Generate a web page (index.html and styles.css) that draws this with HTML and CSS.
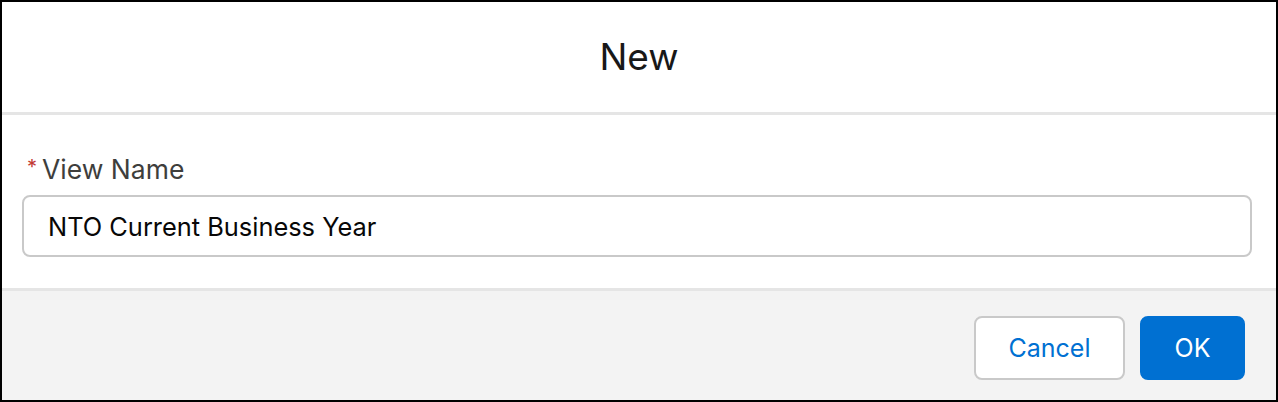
FILE: index.html
```html
<!DOCTYPE html>
<html lang="en">
<head>
<meta charset="utf-8">
<title>New</title>
<link rel="stylesheet" href="styles.css">
</head>
<body>
<div class="modal">
  <header class="modal-header">
    <h2 class="modal-title">New</h2>
  </header>
  <section class="modal-body">
    <label class="field-label" for="viewName"><abbr class="required" title="required">*</abbr>View Name</label>
    <input class="field-input" id="viewName" type="text" value="NTO Current Business Year">
  </section>
  <footer class="modal-footer">
    <button class="btn btn-neutral" type="button">Cancel</button>
    <button class="btn btn-brand" type="button">OK</button>
  </footer>
</div>
</body>
</html>
```

FILE: styles.css
```css
* { box-sizing: border-box; }
html, body {
  margin: 0;
  padding: 0;
  background: #ffffff;
}
body {
  font-family: Inter, "Liberation Sans", Arial, sans-serif;
  color: #181818;
}
.modal {
  width: 1278px;
  height: 402px;
  border: 2px solid #000000;
  display: flex;
  flex-direction: column;
  background: #ffffff;
}
.modal-header {
  height: 113px;
  flex: none;
  display: flex;
  align-items: center;
  justify-content: center;
  border-bottom: 3px solid #e5e5e5;
}
.modal-title {
  margin: 0;
  font-size: 37px;
  font-weight: 400;
  color: #181818;
  line-height: 1;
  padding-bottom: 2px;
}
.modal-body {
  flex: none;
  height: 173px;
  padding: 36px 24px 0 20px;
  display: flex;
  flex-direction: column;
}
.field-label {
  display: flex;
  align-items: center;
  height: 36px;
  font-size: 26.5px;
  color: #3e3e3c;
  margin-bottom: 8px;
}
.required {
  color: #c23934;
  text-decoration: none;
  border: none;
  font-size: 20px;
  margin: 0 5px 0 5px;
  position: relative;
  top: -2px;
}
.field-input {
  height: 62px;
  width: 100%;
  border: 2px solid #c9c9c9;
  border-radius: 8px;
  padding: 0 22px 0 24px;
  font-family: inherit;
  font-size: 25.4px;
  color: #080707;
  background: #ffffff;
  outline: none;
}
.modal-footer {
  flex: 1;
  background: #f3f3f3;
  border-top: 3px solid #e5e5e5;
  display: flex;
  justify-content: flex-end;
  align-items: flex-start;
  gap: 15px;
  padding: 25px 31px 0 0;
}
.btn {
  height: 64px;
  border-radius: 8px;
  font-family: inherit;
  font-size: 25px;
  padding: 0;
  cursor: pointer;
}
.btn-neutral {
  width: 151px;
  background: #ffffff;
  border: 2px solid #c9c9c9;
  color: #0070d2;
}
.btn-brand {
  width: 105px;
  background: #0070d2;
  border: 2px solid #0070d2;
  color: #ffffff;
}
```
